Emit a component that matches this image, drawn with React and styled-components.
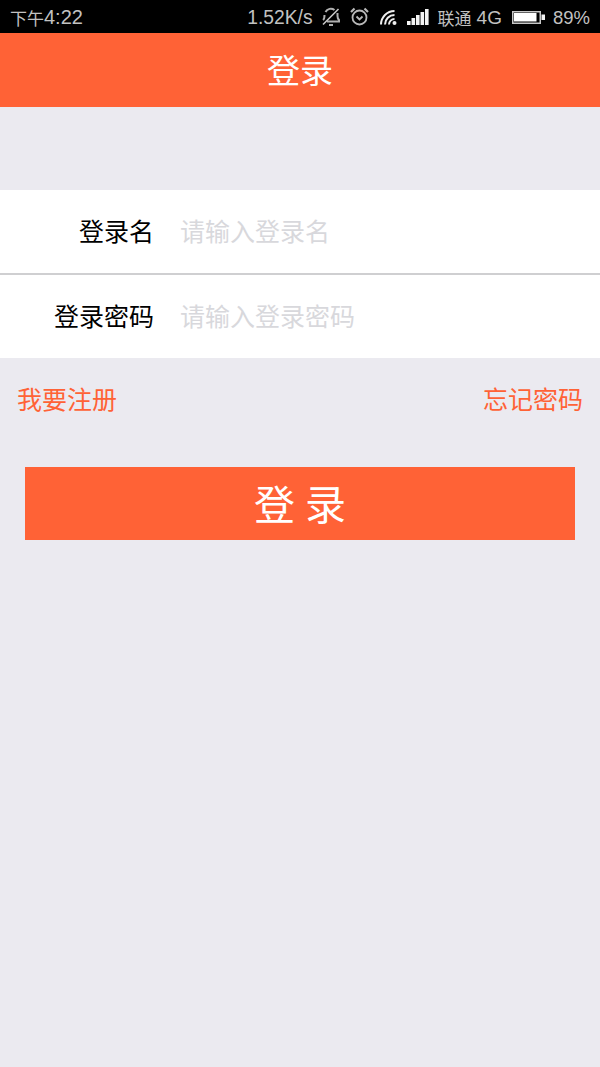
import React from 'react';
import styled, { createGlobalStyle } from 'styled-components';

const cjk = `"Noto Sans CJK SC", "Liberation Sans", sans-serif`;

const GlobalStyle = createGlobalStyle`
  html, body {
    margin: 0;
    padding: 0;
    background: #ebeaf0;
    font-family: ${cjk};
  }
  * { box-sizing: border-box; }
  input::placeholder { color: #d8d8dc; opacity: 1; }
`;

const Page = styled.div`
  width: 600px;
  height: 1067px;
  background: #ebeaf0;
  overflow: hidden;
`;

const StatusBar = styled.div`
  height: 33px;
  background: #000;
  color: #c2c2c2;
  display: flex;
  align-items: center;
  justify-content: space-between;
  padding: 0 10px;
  font-family: "Liberation Sans", sans-serif;
  font-size: 19px;
  line-height: 33px;
`;

const StatusGroup = styled.div`
  display: flex;
  align-items: center;
`;

const StatusText = styled.span`
  display: flex;
  align-items: center;
  padding-top: 1px;
  margin-left: ${p => p.$left || 0}px;
  font-size: ${p => p.$size || 19}px;
`;

const Cjk = styled.span`
  font-family: "Noto Sans CJK SC", sans-serif;
  font-size: 17px;
  margin-right: ${p => p.$right || 0}px;
`;

const StatusIcon = styled.svg`
  display: block;
  flex: none;
  margin-left: ${p => p.$left || 0}px;
  margin-top: ${p => p.$top || 0}px;
`;

const Header = styled.div`
  height: 74px;
  background: #ff6236;
  color: #fff;
  font-size: 33px;
  display: flex;
  align-items: center;
  justify-content: center;
  padding-bottom: 2px;
`;

const Form = styled.div`
  margin-top: 83px;
  background: #fff;
`;

const Row = styled.label`
  height: ${p => (p.$line ? 85 : 83)}px;
  display: flex;
  align-items: center;
  padding-bottom: 3px;
  border-bottom: ${p => (p.$line ? '2px solid #cfcfd1' : 'none')};
`;

const Label = styled.span`
  width: 154px;
  text-align: right;
  font-size: 25px;
  color: #000;
`;

const Field = styled.input`
  flex: 1;
  margin-left: 26px;
  border: 0;
  outline: 0;
  background: transparent;
  font-family: inherit;
  font-size: 25px;
  padding: 0;
`;

const Links = styled.div`
  display: flex;
  justify-content: space-between;
  padding: 22px 17px 0 17px;
`;

const TextLink = styled.a`
  color: #ff6236;
  font-size: 25px;
  line-height: 36px;
`;

const SubmitButton = styled.button`
  display: block;
  width: 550px;
  height: 73px;
  margin: 51px auto 0;
  border: 0;
  background: #ff6236;
  color: #fff;
  font-family: inherit;
  font-size: 41px;
  letter-spacing: 10px;
  padding: 0 0 4px 10px;
`;

function App() {
  return (
    <Page>
      <GlobalStyle />
      <StatusBar>
        <StatusText $size={20}>
          <Cjk>下午</Cjk>4:22
        </StatusText>
        <StatusGroup>
          <StatusText $size={19.3}>1.52K/s</StatusText>
          <StatusIcon $left={8} width="20" height="20" viewBox="0 0 20 20" fill="none" stroke="#b0b0b0" strokeWidth="2">
            <path d="M2 13c1.500-1 1.500-3 1.500-5M16.500 6v3c0 2 .5 3 1.500 4v1.500H6" />
            <path d="M4.500 5A6 6 0 0 1 13.500 3M8 18h4" />
            <path d="M2 17.500L17.500 2" stroke="#c8c8c8" strokeWidth="1.600" />
          </StatusIcon>
          <StatusIcon $left={9} width="19" height="19" viewBox="0 0 19 19" fill="none" stroke="#b8b8b8" strokeWidth="1.800">
            <circle cx="9.500" cy="10.500" r="7" />
            <path d="M6.500 9.500l3 3 3-3" />
            <path d="M1 5l3.500-3.500M18 5l-3.500-3.500" strokeWidth="2.200" />
          </StatusIcon>
          <StatusIcon $left={11} width="17" height="16" viewBox="0 0 17 16" fill="none" stroke="#eeeeee" strokeWidth="2">
            <path d="M1 15.500A13.500 13.500 0 0 1 14.500 2M5 15.500A9.500 9.500 0 0 1 14.500 6M9 15.500A5.500 5.500 0 0 1 14.500 10" />
            <circle cx="14.500" cy="14" r="2" fill="#eeeeee" stroke="none" />
          </StatusIcon>
          <StatusIcon $left={10} width="22" height="16" viewBox="0 0 22 16" fill="#f4f4f4">
            <rect x="0" y="12" width="3.600" height="4" />
            <rect x="4.500" y="9" width="3.600" height="7" />
            <rect x="9" y="6" width="3.600" height="10" />
            <rect x="13.500" y="3" width="3.600" height="13" />
            <rect x="18" y="0" width="3.600" height="16" />
          </StatusIcon>
          <StatusText $left={9}>
            <Cjk $right={5}>联通</Cjk>4G
          </StatusText>
          <StatusIcon $left={10} $top={1} width="33" height="13" viewBox="0 0 33 13">
            <rect x="0.750" y="0.750" width="27.500" height="11.500" fill="none" stroke="#c8c8c8" strokeWidth="1.500" />
            <rect x="2" y="2" width="22.500" height="8.500" fill="#fff" />
            <rect x="29.500" y="3.500" width="3.500" height="5.500" fill="#f4f4f4" />
          </StatusIcon>
          <StatusText $left={8} $size={18.5}>89%</StatusText>
        </StatusGroup>
      </StatusBar>
      <Header>登录</Header>
      <Form>
        <Row $line>
          <Label>登录名</Label>
          <Field placeholder="请输入登录名" />
        </Row>
        <Row>
          <Label>登录密码</Label>
          <Field placeholder="请输入登录密码" />
        </Row>
      </Form>
      <Links>
        <TextLink>我要注册</TextLink>
        <TextLink>忘记密码</TextLink>
      </Links>
      <SubmitButton>登录</SubmitButton>
    </Page>
  );
}

export default App;
